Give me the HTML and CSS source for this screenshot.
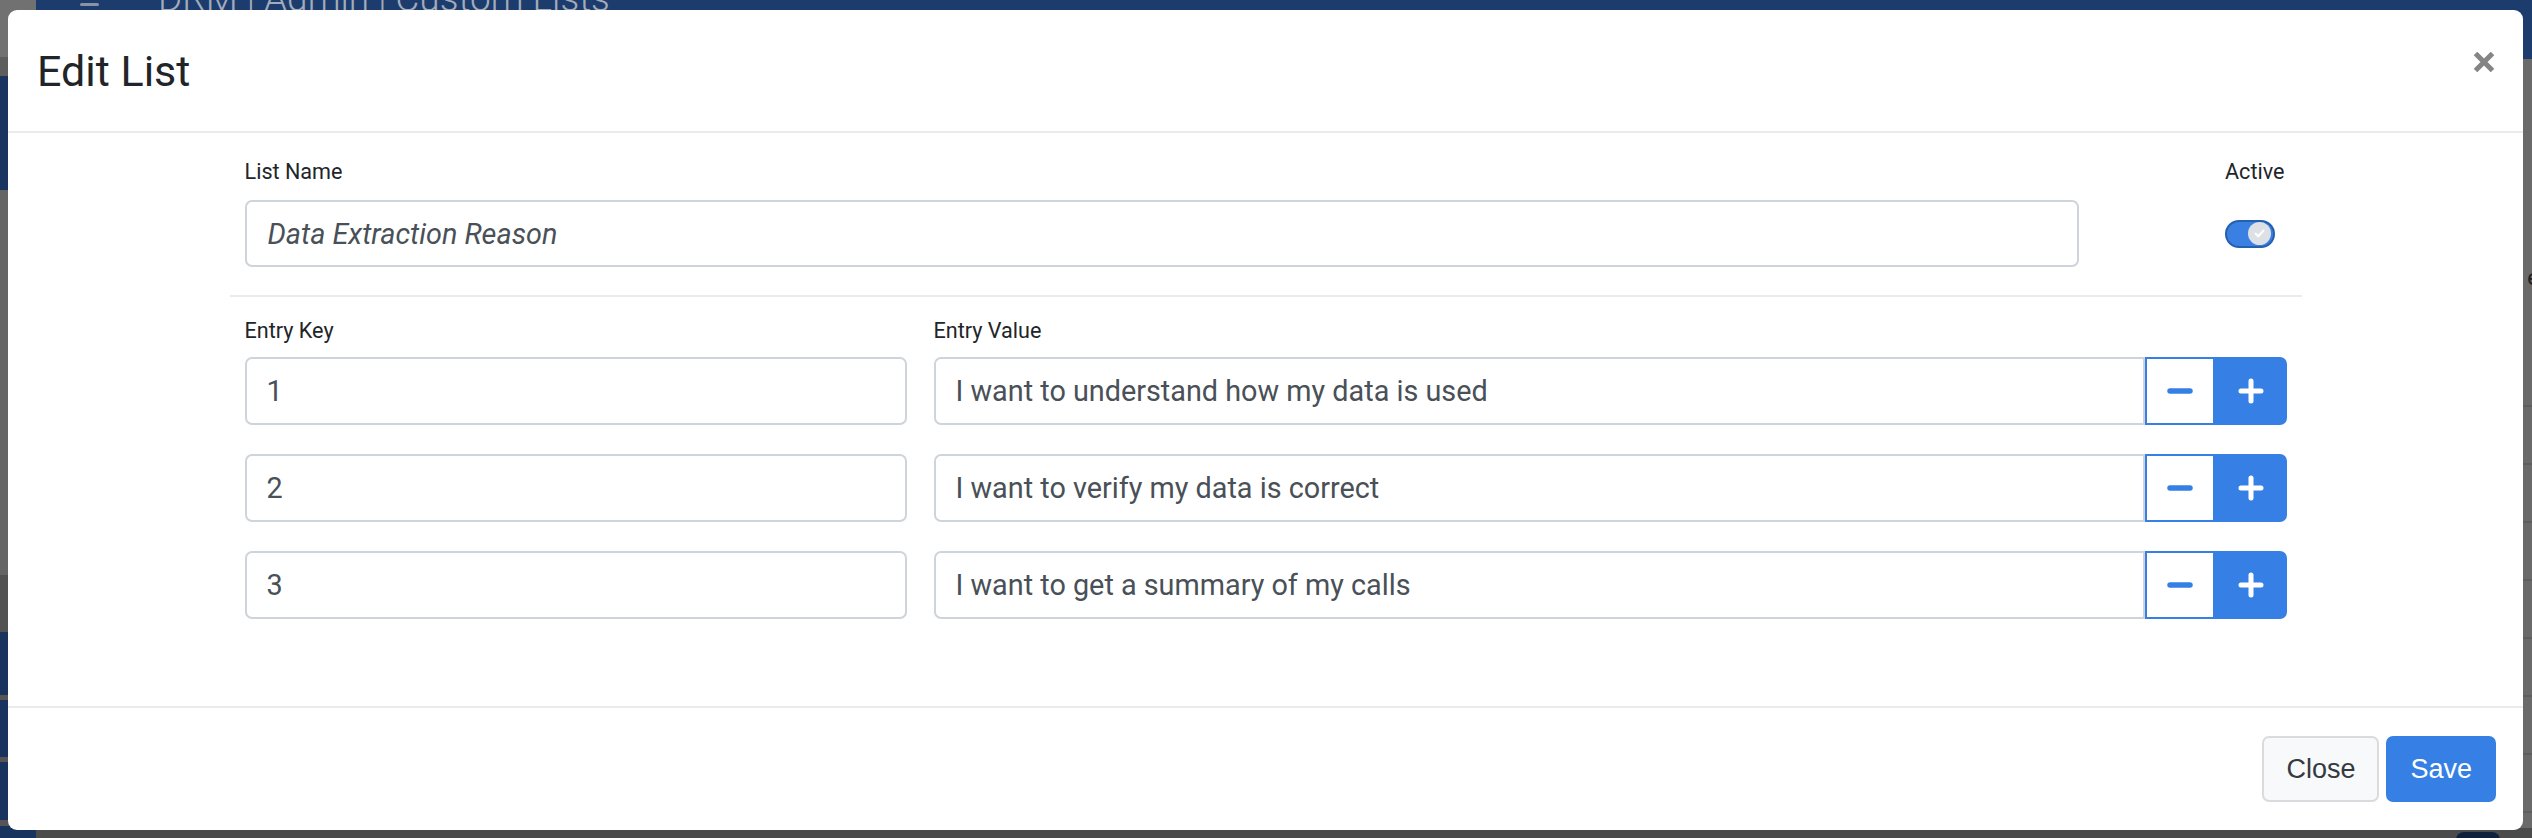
FILE: index.html
```html
<!DOCTYPE html>
<html lang="en">
<head>
<meta charset="utf-8">
<title>Edit List</title>
<link rel="stylesheet" href="styles.css">
</head>
<body>
<div class="page">
  <aside class="sidebar"></aside>
  <div class="main">
    <header class="topbar">
      <span class="burger"></span>
      <span class="app-title">DRM | Admin | Custom Lists</span>
    </header>
    <div class="content">
      <span class="peek">e</span>
    </div>
    <div class="pagefoot"><span class="pill"></span></div>
  </div>
</div>

<div class="modal">
  <div class="modal-header">
    <h5 class="modal-title">Edit List</h5>
    <button class="close-x" type="button" aria-label="Close">
      <svg width="22" height="20" viewBox="0 0 22 20"><path d="M2.5 1.5 L19.5 18.5 M19.5 1.5 L2.5 18.5" stroke="#858585" stroke-width="5"/></svg>
    </button>
  </div>

  <div class="modal-body">
    <div class="container">
      <div class="name-row">
        <div class="name-col">
          <label class="lbl">List Name</label>
          <input class="field italic" type="text" value="Data Extraction Reason">
        </div>
        <div class="active-col">
          <label class="lbl">Active</label>
          <div class="toggle-wrap">
            <span class="toggle">
              <span class="knob">
                <svg width="11" height="9" viewBox="0 0 11 9"><path d="M1.5 4.6 L4.3 7.2 L9.5 1.6" fill="none" stroke="#fff" stroke-width="2" stroke-linecap="round" stroke-linejoin="round"/></svg>
              </span>
            </span>
          </div>
        </div>
      </div>

      <hr class="divider">

      <div class="entries">
        <div class="entry-head">
          <label class="lbl">Entry Key</label>
          <label class="lbl">Entry Value</label>
        </div>
        <div class="entry-list">
          <div class="entry-row">
            <input class="field" type="text" value="1">
            <div class="group">
              <input class="field group-field" type="text" value="I want to understand how my data is used">
              <button class="btn-minus" type="button"><svg width="28" height="8" viewBox="0 0 28 8"><line x1="4" y1="4" x2="24" y2="4" stroke="#3680e5" stroke-width="5.5" stroke-linecap="round"/></svg></button>
              <button class="btn-plus" type="button"><svg width="28" height="28" viewBox="0 0 28 28"><path d="M14 4 V24 M4 14 H24" stroke="#fff" stroke-width="5" stroke-linecap="round"/></svg></button>
            </div>
          </div>
          <div class="entry-row">
            <input class="field" type="text" value="2">
            <div class="group">
              <input class="field group-field" type="text" value="I want to verify my data is correct">
              <button class="btn-minus" type="button"><svg width="28" height="8" viewBox="0 0 28 8"><line x1="4" y1="4" x2="24" y2="4" stroke="#3680e5" stroke-width="5.5" stroke-linecap="round"/></svg></button>
              <button class="btn-plus" type="button"><svg width="28" height="28" viewBox="0 0 28 28"><path d="M14 4 V24 M4 14 H24" stroke="#fff" stroke-width="5" stroke-linecap="round"/></svg></button>
            </div>
          </div>
          <div class="entry-row">
            <input class="field" type="text" value="3">
            <div class="group">
              <input class="field group-field" type="text" value="I want to get a summary of my calls">
              <button class="btn-minus" type="button"><svg width="28" height="8" viewBox="0 0 28 8"><line x1="4" y1="4" x2="24" y2="4" stroke="#3680e5" stroke-width="5.5" stroke-linecap="round"/></svg></button>
              <button class="btn-plus" type="button"><svg width="28" height="28" viewBox="0 0 28 28"><path d="M14 4 V24 M4 14 H24" stroke="#fff" stroke-width="5" stroke-linecap="round"/></svg></button>
            </div>
          </div>
        </div>
      </div>
    </div>
  </div>

  <div class="modal-footer">
    <button class="btn btn-light" type="button">Close</button>
    <button class="btn btn-primary" type="button">Save</button>
  </div>
</div>
</body>
</html>
```

FILE: styles.css
```css
* { box-sizing: border-box; }

html, body {
  margin: 0;
  padding: 0;
  width: 2532px;
  height: 838px;
  overflow: hidden;
  font-family: "Roboto", "Liberation Sans", sans-serif;
}

/* ---------- dimmed page behind the modal ---------- */
.page {
  width: 2532px;
  height: 838px;
  display: flex;
  overflow: hidden;
}

.sidebar {
  width: 36px;
  flex: none;
  background: linear-gradient(to bottom,
    #717171 0 57px, #5d5d5d 57px 76px,
    #18345f 76px 190px, #656565 190px 575px,
    #525252 575px 632px, #17335e 632px 695px,
    #555 695px 700px, #17335e 700px 757px,
    #555 757px 762px, #17335e 762px 820px,
    #555 820px 826px, #17335e 826px);
}

.main {
  flex: 1;
  display: flex;
  flex-direction: column;
}

.topbar {
  height: 59px;
  flex: none;
  background: #1d3c6e;
  display: flex;
  align-items: flex-start;
}

.burger {
  width: 19px;
  height: 3px;
  margin: 3px 0 0 44px;
  border-radius: 2px;
  background: #8a93a3;
}

.app-title {
  margin: -20px 0 0 59px;
  font-size: 37px;
  line-height: 37px;
  font-weight: 300;
  color: #a3acbb;
  white-space: nowrap;
}

.content {
  flex: 1;
  background:
    repeating-linear-gradient(to bottom, transparent 0 56px, #5e5e5e 56px 58px) 0 290px / 100% 100% no-repeat,
    #6a6a6a;
  display: flex;
  flex-direction: column;
}

.peek {
  align-self: flex-end;
  margin: 206px -7px 0 0;
  font-size: 22px;
  color: #1e1e1e;
}

.pagefoot {
  height: 10px;
  flex: none;
  background: #4b4b4b;
  display: flex;
  justify-content: flex-end;
}

.pill {
  width: 44px;
  height: 10px;
  margin-right: 32px;
  margin-top: 4px;
  border-radius: 8px 8px 0 0;
  background: #10213d;
}

/* ---------- modal ---------- */
.modal {
  position: absolute;
  left: 8px;
  top: 10px;
  width: 2515px;
  height: 820px;
  background: #fff;
  border-radius: 9px;
  display: flex;
  flex-direction: column;
  overflow: hidden;
}

.modal-header {
  height: 123px;
  flex: none;
  padding: 0 28px 0 29px;
  border-bottom: 2px solid #e9ecef;
  display: flex;
  align-items: center;
  justify-content: space-between;
}

.modal-title {
  margin: 0;
  font-size: 43px;
  line-height: 64px;
  font-weight: 400;
  color: #212529;
}

.close-x {
  align-self: flex-start;
  margin-top: 42px;
  padding: 0;
  border: 0;
  background: none;
  line-height: 0;
}

.modal-body {
  flex: 1;
  padding-top: 23px;
}

.container {
  width: 2072px;
  margin: 0 auto;
}

.lbl {
  display: block;
  font-size: 21.6px;
  line-height: 32px;
  color: #212529;
  white-space: nowrap;
}

.name-row {
  padding: 0 15px;
  display: flex;
  justify-content: space-between;
}

.name-col {
  width: 1834px;
}

.active-col {
  margin-right: 2px;
}

.name-col .lbl,
.active-col .lbl {
  margin-bottom: 12px;
}

.field {
  display: block;
  width: 100%;
  height: 67px;
  margin: 0;
  padding: 0 20px;
  border: 2px solid #ced4da;
  border-radius: 7px;
  font-family: "Roboto", "Liberation Sans", sans-serif;
  font-size: 28.8px;
  color: #495057;
  background: #fff;
  outline: none;
}

.italic {
  font-style: italic;
  padding-left: 21px;
}

.toggle-wrap {
  height: 67px;
  display: flex;
  align-items: center;
}

.toggle {
  width: 50px;
  height: 28px;
  border-radius: 14px;
  background: #3a80e3;
  border: 2px solid #245fb0;
  display: flex;
  align-items: center;
  justify-content: flex-end;
  padding-right: 2px;
}

.knob {
  width: 23px;
  height: 23px;
  border-radius: 50%;
  background: #dde1e6;
  display: flex;
  align-items: center;
  justify-content: center;
}

.divider {
  margin: 28px 0 18px;
  height: 0;
  border: 0;
  border-top: 2px solid #e9ecef;
}

.entries {
  padding: 0 15px;
}

.entry-head,
.entry-row {
  display: grid;
  grid-template-columns: 662px 1fr;
  column-gap: 27px;
}

.entry-head {
  margin-bottom: 10px;
}

.entry-list {
  display: flex;
  flex-direction: column;
  gap: 29px;
}

.entry-row .field {
  height: 68px;
}

.group {
  display: flex;
  height: 68px;
}

.group-field {
  flex: 1;
  border-radius: 7px 0 0 7px;
}

.btn-minus,
.btn-plus {
  flex: none;
  height: 68px;
  margin: 0;
  padding: 0;
  border: 2px solid #3680e5;
  display: flex;
  align-items: center;
  justify-content: center;
}

.btn-minus {
  width: 70px;
  background: #fff;
}

.btn-plus {
  width: 72px;
  background: #3680e5;
  border-radius: 0 7px 7px 0;
}

.modal-footer {
  height: 124px;
  flex: none;
  border-top: 2px solid #e9ecef;
  padding-right: 27px;
  display: flex;
  align-items: center;
  justify-content: flex-end;
  gap: 7px;
}

.btn {
  height: 66px;
  margin: 0;
  border-radius: 7px;
  font-family: "Liberation Sans", Arial, sans-serif;
  font-size: 27px;
  line-height: 1;
}

.btn-light {
  padding: 0 22px;
  background: #f8f9fa;
  border: 2px solid #d9dbde;
  color: #343a40;
}

.btn-primary {
  padding: 0 22px;
  background: #3680e5;
  border: 2px solid #3680e5;
  color: #fff;
}
```
